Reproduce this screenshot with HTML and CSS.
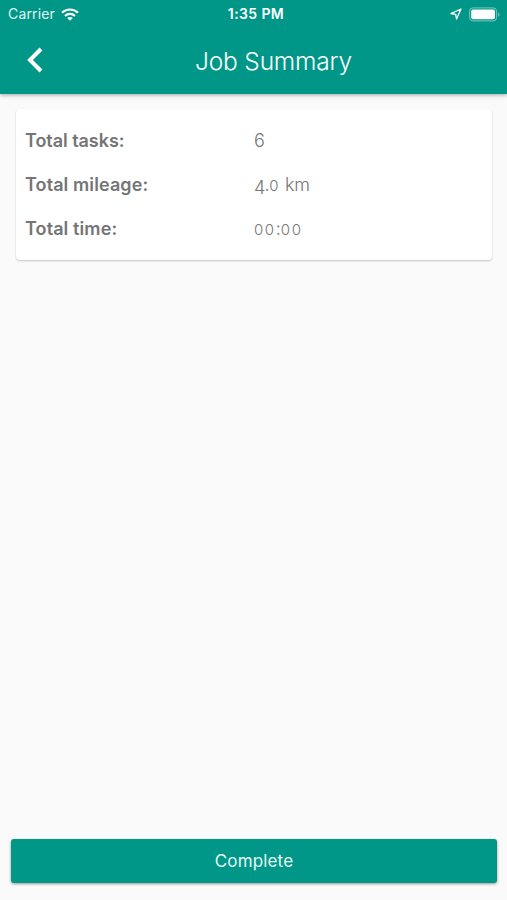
FILE: index.html
```html
<!DOCTYPE html>
<html lang="en">
<head>
<meta charset="utf-8">
<title>Job Summary</title>
<link rel="stylesheet" href="styles.css">
</head>
<body>
<header class="top">
  <div class="status">
    <div class="carrier"><span>Carrier</span>
      <svg width="18" height="13" viewBox="0 0 18 13" fill="none" stroke="#fff" stroke-width="2.1"><path d="M1 4.8C5.5.3 12.5.3 17 4.8M4 7.9c2.8-2.7 7.2-2.7 10 0"/><path d="M6.2 10c1.6-1.5 4-1.5 5.6 0L9 12.8z" fill="#fff" stroke="none"/></svg>
    </div>
    <div class="clock">1:35 PM</div>
    <div class="indicators">
      <svg width="12" height="12" viewBox="0 0 12 12" fill="none" stroke="#fff" stroke-width="1.3" stroke-linejoin="round"><path d="M11 1 1 5.5l4.7.8.8 4.7z"/></svg>
      <svg width="32" height="15" viewBox="0 0 32 15"><rect x=".6" y=".9" width="27" height="13" rx="3.3" fill="none" stroke="#7cc8c0" stroke-width="1"/><rect x="2.2" y="2.5" width="23.8" height="9.8" rx="2" fill="#fff"/><path d="M29.3 5.2c1.8.7 1.8 3.7 0 4.4z" fill="#7cc8c0"/></svg>
    </div>
  </div>
  <div class="bar">
    <svg class="back" width="16" height="26" viewBox="0 0 16 26" fill="none" stroke="#fff" stroke-width="4"><path d="M14 2 3 13l11 11"/></svg>
    <h1 class="title">Job Summary</h1>
  </div>
</header>
<main class="content">
  <dl class="card">
    <div class="row"><dt class="tasks">Total tasks:</dt><dd class="six">6</dd></div>
    <div class="row"><dt class="mileage">Total mileage:</dt><dd class="distance"><span class="four">4</span>.<span class="low">0</span> km</dd></div>
    <div class="row"><dt class="time">Total time:</dt><dd class="duration"><span class="low">00</span>:<span class="low">00</span></dd></div>
  </dl>
</main>
<footer class="footer"><button class="complete">Complete</button></footer>
</body>
</html>
```
FILE: styles.css
```css
* { box-sizing: border-box; }
body {
  margin: 0;
  height: 900px;
  display: flex;
  flex-direction: column;
  background: #fafafa;
  color: #757575;
  font-family: Inter, "Open Sans", sans-serif;
}
.top {
  height: 94px;
  flex: none;
  background: #009788;
  color: #fff;
  box-shadow: 0 1px 4px rgba(0, 0, 0, .35);
}
.status {
  height: 27px;
  padding: 0 6px 0 8px;
  display: grid;
  grid-template-columns: 1fr auto 1fr;
  align-items: center;
  font: 14px/26px Inter, sans-serif;
}
.carrier, .indicators { display: flex; align-items: center; }
.carrier { gap: 6px; letter-spacing: .15px; color: #e0f5f2; }
.clock { padding-left: 3px; font-size: 14px; font-weight: 600; line-height: 28px; letter-spacing: .4px; }
.indicators { justify-content: flex-end; gap: 7px; }
.bar {
  height: 67px;
  display: grid;
  grid-template-columns: 80px 1fr 40px;
  align-items: center;
}
.back { margin: -2px 0 0 27px; }
.title {
  margin: 0;
  text-align: center;
  font-size: 24.5px;
  font-weight: 300;
  line-height: 30px;
  letter-spacing: -.2px;
}
.content { flex: 1; padding: 15px 15px 15px 16px; }
.card {
  margin: 0;
  height: 151px;
  padding: 10px 10px 8px 9px;
  background: #fff;
  border-radius: 4px;
  box-shadow: 0 1px 2px rgba(0, 0, 0, .22);
}
.row {
  height: 44px;
  display: grid;
  grid-template-columns: 229px 1fr;
  line-height: 44px;
  font-size: 18px;
}
dt { font-weight: 600; letter-spacing: -.05px; }
.mileage, .time { letter-spacing: .1px; }
dd { margin: 0; font-weight: 300; color: #757575; }
.distance { letter-spacing: -.25px; }
.low { font-size: 15px; letter-spacing: 1.6px; }
.four { position: relative; top: 3px; }
.footer { padding: 0 10px 17px 11px; }
.complete {
  display: block;
  width: 100%;
  height: 44px;
  padding: 0;
  border: 0;
  border-radius: 3px;
  background: #009788;
  color: #e5f7f4;
  font: 400 17px/44px Inter, sans-serif;
  letter-spacing: .15px;
  box-shadow: 0 1px 3px rgba(0, 0, 0, .4);
}
```
